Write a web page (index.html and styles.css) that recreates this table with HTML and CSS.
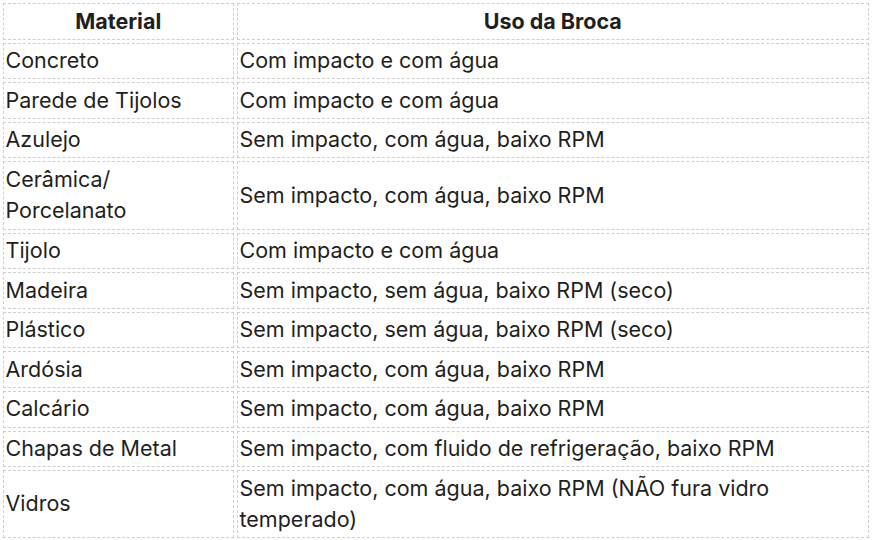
FILE: index.html
```html
<!DOCTYPE html>
<html lang="pt">
<head>
<meta charset="utf-8">
<title>Brocas</title>
<link rel="stylesheet" href="styles.css">
</head>
<body>
<table class="drill-table">
  <thead>
    <tr><th class="col-material">Material</th><th>Uso da Broca</th></tr>
  </thead>
  <tbody>
    <tr><td>Concreto</td><td>Com impacto e com água</td></tr>
    <tr><td>Parede de Tijolos</td><td>Com impacto e com água</td></tr>
    <tr><td>Azulejo</td><td>Sem impacto, com água, baixo RPM</td></tr>
    <tr><td>Cerâmica/ Porcelanato</td><td>Sem impacto, com água, baixo RPM</td></tr>
    <tr><td>Tijolo</td><td>Com impacto e com água</td></tr>
    <tr><td>Madeira</td><td>Sem impacto, sem água, baixo RPM (seco)</td></tr>
    <tr><td>Plástico</td><td>Sem impacto, sem água, baixo RPM (seco)</td></tr>
    <tr><td>Ardósia</td><td>Sem impacto, com água, baixo RPM</td></tr>
    <tr><td>Calcário</td><td>Sem impacto, com água, baixo RPM</td></tr>
    <tr><td>Chapas de Metal</td><td>Sem impacto, com fluido de refrigeração, baixo RPM</td></tr>
    <tr><td>Vidros</td><td>Sem impacto, com água, baixo RPM (NÃO fura vidro temperado)</td></tr>
  </tbody>
</table>
</body>
</html>
```
FILE: styles.css
```css
html, body {
  margin: 0;
  padding: 0;
  background: #ffffff;
}
.drill-table {
  width: 100%;
  border-collapse: separate;
  border-spacing: 3px;
  font-family: Inter, "Noto Sans", sans-serif;
  font-size: 21.5px;
  line-height: 31.6px;
  color: #1f1f21;
}
.drill-table th,
.drill-table td {
  border: 1px dashed #cfcfcf;
  padding: 1.5px 2px 1.5px 1.5px;
  text-align: left;
  vertical-align: middle;
  font-weight: 400;
}
.drill-table th {
  text-align: center;
  font-weight: 700;
}
.col-material {
  width: 225.5px;
}
```
